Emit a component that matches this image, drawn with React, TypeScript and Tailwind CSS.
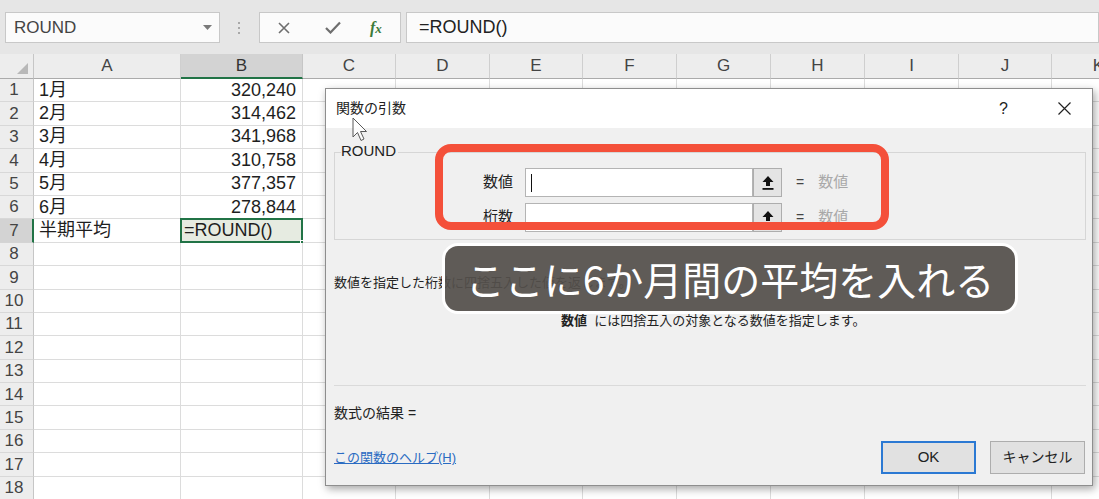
import React from "react";

const COLS = [
  { l: "A", w: "w-[147px]" },
  { l: "B", w: "w-[122px]" },
  { l: "C", w: "w-[93px]" },
  { l: "D", w: "w-[94px]" },
  { l: "E", w: "w-[93px]" },
  { l: "F", w: "w-[94px]" },
  { l: "G", w: "w-[94px]" },
  { l: "H", w: "w-[94px]" },
  { l: "I", w: "w-[94px]" },
  { l: "J", w: "w-[93px]" },
  { l: "K", w: "w-[94px]" },
];

const DATA: Record<number, [string, string]> = {
  1: ["1月", "320,240"],
  2: ["2月", "314,462"],
  3: ["3月", "341,968"],
  4: ["4月", "310,758"],
  5: ["5月", "377,357"],
  6: ["6月", "278,844"],
  7: ["半期平均", "=ROUND()"],
};

function UpArrowIcon() {
  return (
    <svg width="14" height="16" viewBox="0 0 14 16">
      <path d="M7 1 L12.5 7 H9 V11 H5 V7 H1.5 Z" fill="#111" />
      <rect x="1.5" y="13" width="11" height="1.8" fill="#111" />
    </svg>
  );
}

function Row({ r }: { r: number }) {
  const d = DATA[r];
  const sel = r === 7;
  return (
    <div className="flex h-[23.4px] shrink-0">
      <div
        className={
          sel
            ? "w-[34px] shrink-0 bg-[#d3d3d3] border-r-2 border-r-[#217346] border-b border-b-[#d4d4d4] flex items-center justify-center pr-[4px] text-[17px] text-[#444]"
            : "w-[34px] shrink-0 bg-[#ededed] border-r border-r-[#c6c6c6] border-b border-b-[#d8d8d8] flex items-center justify-center pr-[5px] text-[17px] text-[#444]"
        }
      >
        {r}
      </div>
      {COLS.map((c, i) => (
        <div
          key={c.l}
          className={
            c.w +
            " shrink-0 border-r border-b border-[#dcdcdc] flex items-center text-[18px] text-[#1e1e1e] relative " +
            (i === 1 ? "justify-end pr-[6px] " : "pl-[5px] ") +
            (sel && i === 1 ? "bg-[#e6ebe1] justify-start pl-[3px]" : "bg-white")
          }
        >
          {d && i === 0 ? d[0] : null}
          {d && i === 1 ? d[1] : null}
          {sel && i === 1 ? (
            <>
              <div className="absolute left-[-1px] top-[-1px] right-[-1px] bottom-[-1px] border-2 border-[#217346]" />
              <div className="absolute right-[-4px] bottom-[-4px] w-[6px] h-[6px] bg-[#217346] border border-white" />
            </>
          ) : null}
        </div>
      ))}
    </div>
  );
}

export default function App() {
  const rows = Array.from({ length: 18 }, (_, i) => i + 1);
  return (
    <div className="relative w-[1099px] h-[499px] overflow-hidden bg-white font-['Liberation_Sans','Noto_Sans_CJK_JP',sans-serif]">
      {/* Formula bar */}
      <div className="h-[54px] bg-[#e6e6e6] flex items-start pt-[12px]">
        <div className="ml-[5px] w-[215px] h-[31px] bg-[#fbfbfb] border border-[#c8c8c8] flex items-center pl-[8px] pr-[7px] text-[17px] text-[#444]">
          <span>ROUND</span>
          <svg className="ml-auto" width="9" height="5" viewBox="0 0 9 5">
            <path d="M0 0 H9 L4.5 5 Z" fill="#7a7a7a" />
          </svg>
        </div>
        <div className="ml-[18px] h-[31px] flex flex-col items-center justify-center gap-[3px]">
          <div className="w-[2px] h-[2px] bg-[#a8a8a8]" />
          <div className="w-[2px] h-[2px] bg-[#a8a8a8]" />
          <div className="w-[2px] h-[2px] bg-[#a8a8a8]" />
        </div>
        <div className="ml-[19px] w-[142px] h-[31px] bg-[#fbfbfb] border border-[#c8c8c8] flex items-center pl-[18px]">
          <svg width="12" height="12" viewBox="0 0 12 12">
            <path d="M1 1 L11 11 M11 1 L1 11" stroke="#6e6e6e" strokeWidth="1.6" />
          </svg>
          <svg className="ml-[35px]" width="16" height="13" viewBox="0 0 16 13">
            <path d="M1 7 L5.5 11.5 L15 1.5" stroke="#6e6e6e" strokeWidth="2.2" fill="none" />
          </svg>
          <span className="ml-[29px] font-['Liberation_Serif',serif] italic font-bold text-[16px] text-[#3d7a3a]">
            f<span className="text-[13px]">x</span>
          </span>
        </div>
        <div className="ml-[5px] flex-1 h-[31px] bg-[#fbfbfb] border border-[#c8c8c8] flex items-center pl-[12px] text-[18px] text-[#222]">
          =ROUND()
        </div>
      </div>

      {/* Column headers */}
      <div className="flex h-[25px]">
        <div className="w-[34px] shrink-0 bg-[#ededed] border-r border-r-[#c6c6c6] border-b border-b-[#ababab] flex items-end justify-end pr-[5px] pb-[4px]">
          <svg width="11" height="11" viewBox="0 0 11 11">
            <path d="M11 0 V11 H0 Z" fill="#b8b8b8" />
          </svg>
        </div>
        {COLS.map((c) => (
          <div
            key={c.l}
            className={
              c.w +
              (c.l === "B"
                ? " shrink-0 bg-[#d3d3d3] border-r border-r-[#c6c6c6] border-b-2 border-b-[#217346] flex items-center justify-center text-[17px] text-[#333]"
                : " shrink-0 bg-[#ededed] border-r border-r-[#cfcfcf] border-b border-b-[#ababab] flex items-center justify-center text-[17px] text-[#444]")
            }
          >
            {c.l}
          </div>
        ))}
      </div>

      {/* Grid rows */}
      <div className="flex flex-col">
        {rows.map((r) => (
          <Row key={r} r={r} />
        ))}
      </div>

      {/* Dialog */}
      <div className="absolute left-[325px] top-[88px] w-[768px] h-[398px] border border-[#8e8e8e] bg-[#f0f0f0] shadow-[2px_3px_8px_rgba(0,0,0,0.35)] flex flex-col font-['Liberation_Sans','Noto_Sans_CJK_JP',sans-serif] text-[#222]">
        <div className="h-[39px] shrink-0 bg-white flex items-center pl-[10px] pr-[21px]">
          <span className="text-[14px]">関数の引数</span>
          <span className="ml-auto text-[16px] text-[#222]">?</span>
          <svg className="ml-[50px]" width="13" height="13" viewBox="0 0 13 13">
            <path d="M0.5 0.5 L12.5 12.5 M12.5 0.5 L0.5 12.5" stroke="#222" strokeWidth="1.2" />
          </svg>
        </div>
        <div className="flex flex-col pl-[8px] pr-[6px]">
          <div className="relative mt-[24px] h-[88px] border border-[#d6d6d6] pt-[15px]">
            <span className="absolute left-[6px] top-[-12px] bg-[#f0f0f0] pr-[2px] text-[15px] leading-[20px] text-[#222]">
              ROUND
            </span>
            <div className="flex items-center h-[29px]">
              <div className="w-[190px] shrink-0 text-right pr-[12px] text-[15px]">数値</div>
              <div className="w-[228px] h-[29px] bg-white border border-[#b4b4b4] flex items-center pl-[5px]">
                <div className="w-px h-[18px] bg-[#111]" />
              </div>
              <div className="w-[29px] h-[29px] bg-[#e4e4e4] border border-[#adadad] flex items-center justify-center">
                <UpArrowIcon />
              </div>
              <span className="ml-[14px] text-[14px] text-[#444]">=</span>
              <span className="ml-[14px] text-[15px] text-[#a8a8a8]">数値</span>
            </div>
            <div className="flex items-center h-[29px] mt-[6px]">
              <div className="w-[190px] shrink-0 text-right pr-[12px] text-[15px]">桁数</div>
              <div className="w-[228px] h-[29px] bg-white border border-[#b4b4b4]" />
              <div className="w-[29px] h-[29px] bg-[#e4e4e4] border border-[#adadad] flex items-center justify-center">
                <UpArrowIcon />
              </div>
              <span className="ml-[14px] text-[14px] text-[#444]">=</span>
              <span className="ml-[14px] text-[15px] text-[#a8a8a8]">数値</span>
            </div>
          </div>
          <div className="mt-[34px] text-[13px] leading-[18px]">
            数値を指定した桁数に四捨五入した値を返します。
          </div>
          <div className="mt-[20px] pl-[227px] text-[13px] leading-[18px]">
            <b>数値</b>&nbsp;&nbsp;には四捨五入の対象となる数値を指定します。
          </div>
          <div className="mt-[55px] h-px bg-[#dadada]" />
          <div className="mt-[17px] text-[14px] leading-[20px]">数式の結果 =</div>
          <div className="mt-[18px] flex items-center">
            <span className="text-[13px] text-[#2a6bc2] underline">この関数のヘルプ(H)</span>
            <div className="ml-auto w-[95px] h-[33px] border-2 border-[#2b79d3] bg-[#e1e1e1] flex items-center justify-center text-[15px]">
              OK
            </div>
            <div className="ml-[14px] mr-[1px] w-[95px] h-[33px] border border-[#adadad] bg-[#e1e1e1] flex items-center justify-center text-[14px]">
              キャンセル
            </div>
          </div>
        </div>
      </div>

      {/* Red highlight */}
      <div className="absolute left-[435px] top-[144px] w-[454px] h-[86px] border-[8px] border-[#f4503a] rounded-[16px]" />

      {/* Caption */}
      <div className="absolute left-[442px] top-[243px] w-[576px] h-[71px] rounded-[16px] border-[3px] border-white bg-[rgba(84,80,75,0.93)] flex items-center justify-center text-white text-[39px] font-['Noto_Sans_CJK_JP',sans-serif]">
        ここに6か月間の平均を入れる
      </div>

      {/* Mouse cursor */}
      <svg className="absolute left-[352px] top-[117px] opacity-80" width="16" height="26" viewBox="0 0 16 26">
        <path d="M1 1 V20 L5.5 15.5 L9 23.5 L12 22 L8.5 14.5 L14.5 14.5 Z" fill="#fff" stroke="#333" strokeWidth="1" />
      </svg>
    </div>
  );
}
